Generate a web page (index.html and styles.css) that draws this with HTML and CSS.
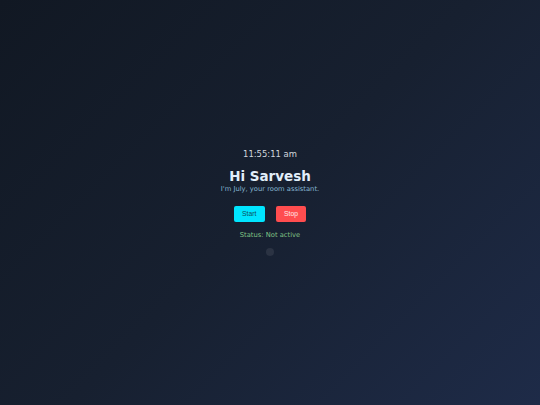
FILE: index.html
```html
<!DOCTYPE html>
<html lang="en">
<head>
<meta charset="utf-8">
<title>July</title>
<link rel="stylesheet" href="styles.css">
</head>
<body>
<main class="panel">
  <div class="clock">11:55:11 am</div>
  <h1 class="greeting">Hi Sarvesh</h1>
  <p class="tagline">I'm July, your room assistant.</p>
  <div class="controls">
    <button class="btn btn-start">Start</button>
    <button class="btn btn-stop">Stop</button>
  </div>
  <p class="status">Status: Not active</p>
  <div class="indicator"></div>
</main>
</body>
</html>
```

FILE: styles.css
```css
html, body {
  margin: 0;
  height: 100%;
}

body {
  background: linear-gradient(135deg, #111823 0%, #172030 50%, #1e2b48 100%);
  font-family: "DejaVu Sans", Verdana, sans-serif;
  display: flex;
  align-items: center;
  justify-content: center;
}

.panel {
  display: flex;
  flex-direction: column;
  align-items: center;
  text-align: center;
}

.clock {
  font-size: 8.44px;
  color: #d3d7de;
  margin-bottom: 8.9px;
}

.greeting {
  margin: 0;
  font-size: 13.5px;
  font-weight: bold;
  color: #e2eefa;
}

.tagline {
  margin: 1px 0 0;
  font-size: 6.75px;
  color: #86b6d2;
}

.controls {
  display: flex;
  gap: 11px;
  margin-top: 12.9px;
}

.btn {
  font-family: "Liberation Sans", Arial, sans-serif;
  font-size: 6.75px;
  line-height: 7.8px;
  padding: 4.2px 8.4px;
  border: none;
  border-radius: 2px;
  cursor: pointer;
}

.btn-start {
  background: #00e5ff;
  color: #0d4f5c;
}

.btn-stop {
  background: #ff4d4f;
  color: #ffe9e9;
}

.status {
  margin: 9.1px 0 0;
  font-size: 6.75px;
  color: #7fc083;
}

.indicator {
  width: 8.4px;
  height: 8.4px;
  border-radius: 50%;
  background: #2b3343;
  margin-top: 8.5px;
}
```
